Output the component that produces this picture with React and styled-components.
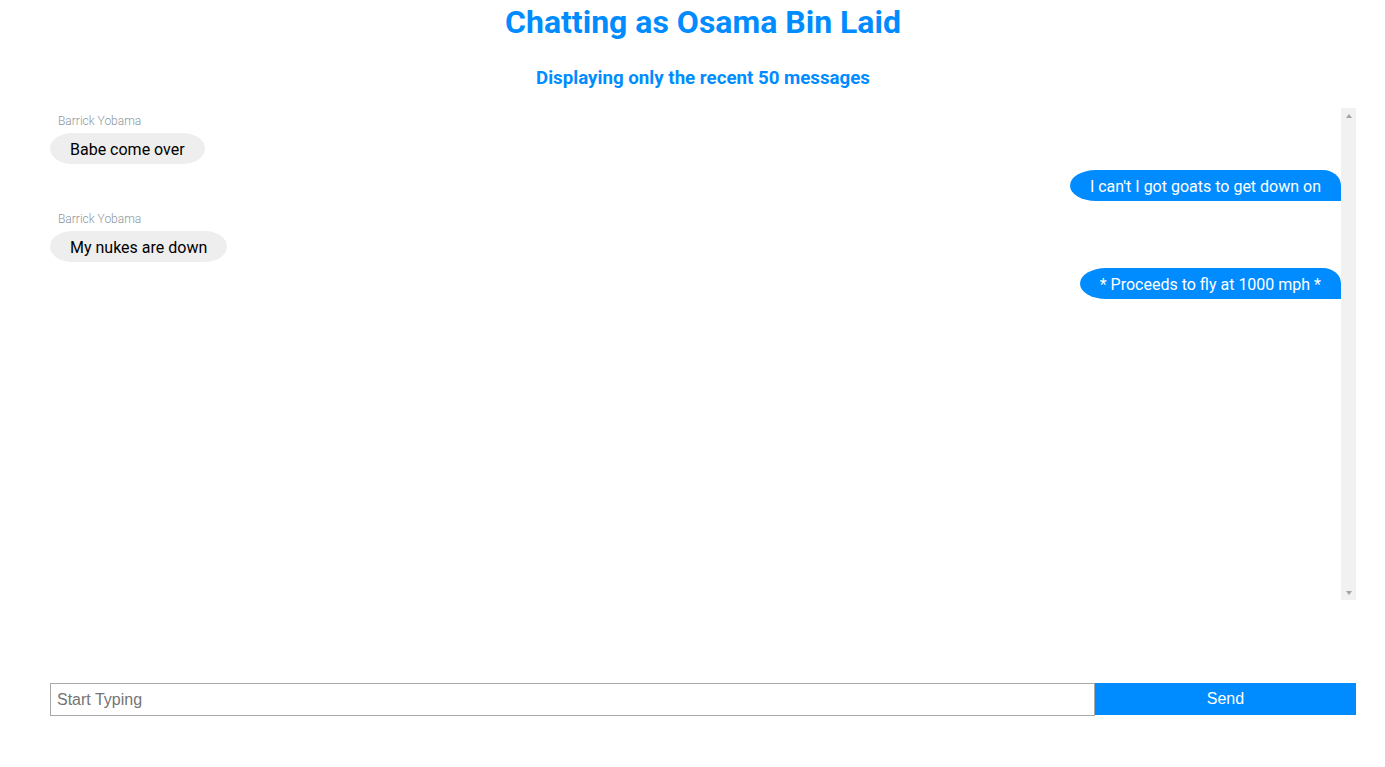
import React, { useState } from "react";
import styled, { createGlobalStyle } from "styled-components";

const BLUE = "#008cff";

const messages = [
  { id: 1, author: "Barrick Yobama", text: "Babe come over", mine: false },
  { id: 2, author: "Osama Bin Laid", text: "I can't I got goats to get down on", mine: true },
  { id: 3, author: "Barrick Yobama", text: "My nukes are down", mine: false },
  { id: 4, author: "Osama Bin Laid", text: "* Proceeds to fly at 1000 mph *", mine: true },
];

const App = () => {
  const [value, setValue] = useState("");

  return (
    <>
      <GlobalStyle />
      <StyledPage>
        <Title>Chatting as Osama Bin Laid</Title>
        <Subtitle>Displaying only the recent 50 messages</Subtitle>
        <ChatFrame>
          <MessageList>
            {messages.map((msg) => (
              <Message key={msg.id} $mine={msg.mine}>
                {!msg.mine && <Author>{msg.author}</Author>}
                <Bubble $mine={msg.mine}>{msg.text}</Bubble>
              </Message>
            ))}
          </MessageList>
          <ScrollRail>
            <ScrollButton>
              <Arrow $dir="up" />
            </ScrollButton>
            <ScrollButton>
              <Arrow $dir="down" />
            </ScrollButton>
          </ScrollRail>
        </ChatFrame>
        <StyledForm onSubmit={(e) => e.preventDefault()}>
          <Input
            placeholder="Start Typing"
            value={value}
            onChange={(e) => setValue(e.target.value)}
          />
          <SendButton type="submit">Send</SendButton>
        </StyledForm>
      </StyledPage>
    </>
  );
};

const GlobalStyle = createGlobalStyle`
  body {
    margin: 0;
    background: #fff;
    font-family: Roboto, "Noto Sans", sans-serif;
  }
`;

const StyledPage = styled.div`
  margin: 0 29px 0 50px;
  display: flex;
  flex-direction: column;
`;

const Title = styled.h1`
  margin: 3px 0 0;
  font-size: 32px;
  line-height: 38px;
  font-weight: 700;
  color: ${BLUE};
  text-align: center;
`;

const Subtitle = styled.h3`
  margin: 26px 0 0;
  font-size: 18.72px;
  line-height: 22px;
  font-weight: 700;
  color: ${BLUE};
  text-align: center;
`;

const ChatFrame = styled.div`
  margin-top: 19px;
  height: 492px;
  display: flex;
`;

const MessageList = styled.div`
  flex: 1;
  overflow-y: auto;
  display: flex;
  flex-direction: column;
`;

const ScrollRail = styled.div`
  width: 15px;
  background: #f1f1f1;
  display: flex;
  flex-direction: column;
  justify-content: space-between;
`;

const ScrollButton = styled.div`
  height: 15px;
  display: flex;
  align-items: center;
  justify-content: center;
`;

const Arrow = styled.span`
  width: 0;
  height: 0;
  border-left: 3.5px solid transparent;
  border-right: 3.5px solid transparent;
  ${(p) =>
    p.$dir === "up"
      ? "border-bottom: 4px solid #a3a3a3;"
      : "border-top: 4px solid #a3a3a3;"}
`;

const Message = styled.div`
  display: flex;
  flex-direction: column;
  align-items: ${(p) => (p.$mine ? "flex-end" : "flex-start")};
  margin-bottom: ${(p) => (p.$mine ? "5px" : "6px")};
`;

const Author = styled.span`
  margin: 5px 0 4px 8px;
  font-size: 12px;
  line-height: 16px;
  font-weight: 300;
  color: #8c969e;
`;

const Bubble = styled.div`
  box-sizing: border-box;
  padding: 2px 20px 0;
  height: 31px;
  line-height: 29px;
  font-size: 16px;
  color: ${(p) => (p.$mine ? "#fff" : "#000")};
  background: ${(p) => (p.$mine ? BLUE : "#eeeeee")};
  border-radius: ${(p) =>
    p.$mine ? "26px 18px 0 26px / 15.5px 15.5px 0 15.5px" : "22px / 15.5px"};
`;

const StyledForm = styled.form`
  margin-top: 83px;
  display: flex;
`;

const Input = styled.input`
  box-sizing: border-box;
  width: 80%;
  height: 33px;
  padding: 0 6px;
  border: 1px solid #a9a9a9;
  font-family: "Liberation Sans", Arial, sans-serif;
  font-size: 16px;
  outline: none;

  &::placeholder {
    color: #757575;
  }
`;

const SendButton = styled.button`
  width: 20%;
  height: 32px;
  border: none;
  background: ${BLUE};
  color: #fff;
  font-family: "Liberation Sans", Arial, sans-serif;
  font-size: 16px;
  cursor: pointer;
`;

export default App;
